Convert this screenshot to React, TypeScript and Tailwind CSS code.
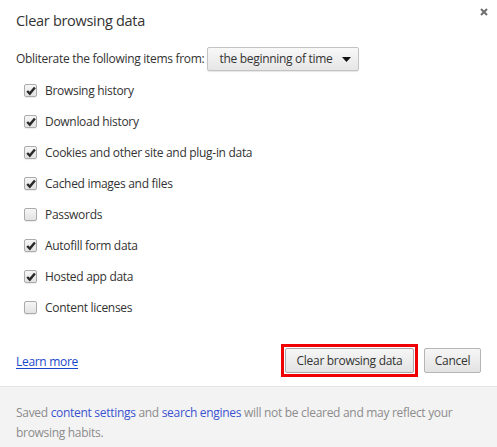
import React from "react";

const items: [string, boolean][] = [
  ["Browsing history", true],
  ["Download history", true],
  ["Cookies and other site and plug-in data", true],
  ["Cached images and files", true],
  ["Passwords", false],
  ["Autofill form data", true],
  ["Hosted app data", true],
  ["Content licenses", false],
];

function Check({ checked }: { checked: boolean }) {
  return (
    <div className="relative w-[13px] h-[13px] rounded-[2px] border border-[#ababab] bg-gradient-to-b from-[#f6f6f6] to-[#e2e2e2] shadow-[0_1px_1px_rgba(0,0,0,0.08)]">
      {checked && (
        <svg className="absolute left-[1px] top-[1px]" width="10" height="10" viewBox="0 0 10 10">
          <path d="M1.2 5 L3.8 7.6 L8.9 1.4" fill="none" stroke="#2a2a2a" strokeWidth="2.4" strokeLinejoin="miter" />
        </svg>
      )}
    </div>
  );
}

export default function App() {
  return (
    <div
      className="w-[497px] h-[447px] bg-white flex flex-col text-[#333] relative overflow-hidden"
      style={{ fontFamily: '"Open Sans", "Noto Sans", sans-serif' }}
    >
      <svg className="absolute left-[480px] top-[8px]" width="8" height="8" viewBox="0 0 8 8">
        <path d="M1 1 L7 7 M7 1 L1 7" stroke="#6f6f6f" strokeWidth="2" />
      </svg>
      <div className="pt-[11px] px-[16px] text-[14.5px] leading-[20px] tracking-[-0.3px]">Clear browsing data</div>
      <div className="mt-[16px] px-[16px] flex items-center h-[24px] text-[12px] tracking-[-0.3px]">
        <span>Obliterate the following items from:</span>
        <div className="ml-[3px] w-[152px] h-[24px] border border-[#c3c3c3] rounded-[2px] bg-gradient-to-b from-[#f8f8f8] to-[#e6e6e6] shadow-[0_1px_1px_rgba(0,0,0,0.1)] flex items-center pl-[11px] pr-[7px]">
          <span className="flex-1">the beginning of time</span>
          <svg width="9" height="5" viewBox="0 0 9 5">
            <path d="M0 0 L9 0 L4.5 5 Z" fill="#111" />
          </svg>
        </div>
      </div>
      <div className="mt-[4px] flex flex-col">
        {items.map(([label, checked]) => (
          <div key={label} className="h-[31px] flex items-center pl-[24px] text-[12px] tracking-[-0.3px]">
            <Check checked={checked} />
            <span className="ml-[8px]">{label}</span>
          </div>
        ))}
      </div>
      <div className="mt-[21px] px-[16px] flex items-center h-[33px]">
        <a className="text-[12px] text-[#1a47c9] underline underline-offset-2 tracking-[-0.3px] mt-[3px]" href="#">
          Learn more
        </a>
        <div className="flex-1" />
        <div className="border-[3px] border-[#f00000] p-px">
          <div className="w-[129px] h-[25px] border border-[#a8a8a8] rounded-[2px] bg-gradient-to-b from-[#f6f6f6] to-[#e3e3e3] flex items-center justify-center text-[12px] tracking-[-0.3px] text-[#333]">
            Clear browsing data
          </div>
        </div>
        <div className="ml-[6px] w-[57px] h-[25px] border border-[#b5b5b5] rounded-[2px] bg-gradient-to-b from-[#f6f6f6] to-[#e3e3e3] flex items-center justify-center text-[12px] tracking-[-0.3px] text-[#333]">
          Cancel
        </div>
      </div>
      <div className="mt-[9px] flex-1 bg-[#f3f3f3] border-t border-[#e4e4e4] px-[16px] pt-[16px] text-[12px] leading-[20px] text-[#8c8c8c] tracking-[-0.3px]">
        <p>
          <span>Saved </span>
          <span className="text-[#3a52d0]">content settings</span>
          <span> and </span>
          <span className="text-[#3a52d0]">search engines</span>
          <span> will not be cleared and may reflect your browsing habits.</span>
        </p>
      </div>
    </div>
  );
}
